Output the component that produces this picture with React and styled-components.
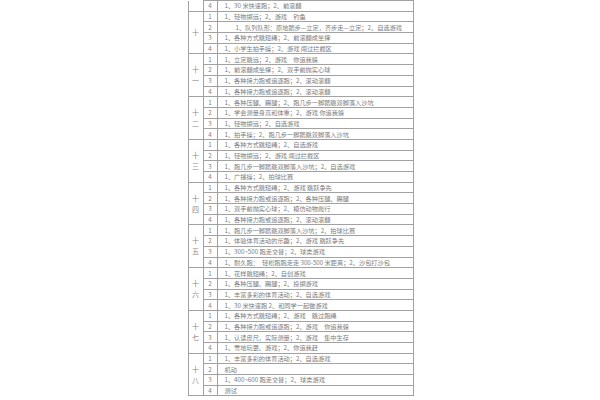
import React from "react";
import styled, { createGlobalStyle } from "styled-components";

const GlobalStyle = createGlobalStyle`
  html, body { margin: 0; padding: 0; background: #ffffff; }
  body { font-family: "Noto Sans CJK SC", "Noto Sans", sans-serif; }
`;

const Page = styled.div`
  width: 600px;
  height: 400px;
  overflow: hidden;
  display: flex;
  justify-content: center;
  align-items: flex-start;
`;

const Table = styled.table`
  border-collapse: collapse;
  table-layout: fixed;
  width: 226px;
  margin-left: 1px;
  color: #7c7c7c;
  font-size: 6.2px;
`;

const Row = styled.tr`
  height: 10.7px;
`;

const LabelCell = styled.td`
  width: 15px;
  border: 1px solid #a2a2a2;
  border-top: ${(p) => (p.$open ? "none" : "1px solid #a2a2a2")};
  text-align: center;
  vertical-align: middle;
  padding: 0;
  font-size: 7px;
  line-height: 11px;
  color: #8a8a8a;
`;

const NumCell = styled.td`
  width: 14px;
  border: 1px solid #a2a2a2;
  text-align: center;
  padding: 0;
  line-height: 9px;
  white-space: nowrap;
`;

const TextCell = styled.td`
  border: 1px solid #a2a2a2;
  padding: 0 0 0 ${(p) => (p.$indent ? "18px" : "7px")};
  line-height: 9px;
  white-space: nowrap;
  overflow: hidden;
`;

const groups = [
  {
    label: null,
    rows: [["4", "1、30 米快速跑；2、前滚翻"]],
  },
  {
    label: ["十"],
    rows: [
      ["1", "1、轻物掷远；2、游戏　钓鱼"],
      ["2", "1、队列队形：原地踏步—立定，齐步走—立定；2、自选游戏", true],
      ["3", "1、各种方式跳短绳；2、前滚翻成坐撑"],
      ["4", "1、小学生拍手操；2、游戏 闯过拦截区"],
    ],
  },
  {
    label: ["十", "一"],
    rows: [
      ["1", "1、立定跳远；2、游戏　你追我躲"],
      ["2", "1、前滚翻成坐撑；2、双手前抛实心球"],
      ["3", "1、各种接力跑或追逐跑；2、滚动滚翻"],
      ["4", "1、各种接力跑或追逐跑；2、滚动滚翻"],
    ],
  },
  {
    label: ["十", "二"],
    rows: [
      ["1", "1、各种压腿、踢腿；2、跑几步一脚踏跳双脚落入沙坑"],
      ["2", "1、学会测量身高和体重；2、游戏 你追我躲"],
      ["3", "1、轻物掷远；2、自选游戏"],
      ["4", "1、拍手操；2、跑几步一脚踏跳双脚落入沙坑"],
    ],
  },
  {
    label: ["十", "三"],
    rows: [
      ["1", "1、各种方式跳短绳；2、自选游戏"],
      ["2", "1、轻物掷远；2、游戏 闯过拦截区"],
      ["3", "1、跑几步一脚踏跳双脚落入沙坑；2、自选游戏"],
      ["4", "1、广播操；2、拍球比赛"],
    ],
  },
  {
    label: ["十", "四"],
    rows: [
      ["1", "1、各种方式跳短绳；2、游戏 跳跃争先"],
      ["2", "1、各种接力跑或追逐跑；2、各种压腿、踢腿"],
      ["3", "1、双手前抛实心球；2、模仿动物爬行"],
      ["4", "1、各种接力跑或追逐跑；2、滚动滚翻"],
    ],
  },
  {
    label: ["十", "五"],
    rows: [
      ["1", "1、跑几步一脚踏跳双脚落入沙坑；2、拍球比赛"],
      ["2", "1、体验体育活动的乐趣；2、游戏 跳跃争先"],
      ["3", "1、300~500 跑走交替；2、球类游戏"],
      ["4", "1、耐久跑：　轻松跑跑走走 300-500 米距离；2、沙包打沙包"],
    ],
  },
  {
    label: ["十", "六"],
    rows: [
      ["1", "1、花样跳短绳；2、自创游戏"],
      ["2", "1、各种压腿、踢腿；2、投掷游戏"],
      ["3", "1、丰富多彩的体育活动；2、自选游戏"],
      ["4", "1、30 米快速跑 2、和同学一起做游戏"],
    ],
  },
  {
    label: ["十", "七"],
    rows: [
      ["1", "1、各种方式跳短绳；2、游戏　跳过跑绳"],
      ["2", "1、各种接力跑或追逐跑；2、游戏　你追我躲"],
      ["3", "1、认读皮尺，实际测量；2、游戏　集中生存"],
      ["4", "1、雪地玩耍、游戏；2、你追我赶"],
    ],
  },
  {
    label: ["十", "八"],
    rows: [
      ["1", "1、丰富多彩的体育活动；2、自选游戏"],
      ["2", "机动"],
      ["3", "1、400~600 跑走交替；2、球类游戏"],
      ["4", "测试"],
    ],
  },
];

export default function App() {
  return (
    <>
      <GlobalStyle />
      <Page>
        <Table>
          <colgroup>
            <col style={{ width: "15px" }} />
            <col style={{ width: "14px" }} />
            <col />
          </colgroup>
          <tbody>
            {groups.map((g, gi) =>
              g.rows.map((r, ri) => (
                <Row key={`${gi}-${ri}`}>
                  {ri === 0 && (
                    <LabelCell rowSpan={g.rows.length} $open={!g.label}>
                      {g.label &&
                        g.label.map((c, ci) => (
                          <React.Fragment key={ci}>
                            {ci > 0 && <br />}
                            {c}
                          </React.Fragment>
                        ))}
                    </LabelCell>
                  )}
                  <NumCell>{r[0]}</NumCell>
                  <TextCell $indent={r[2]}>{r[1]}</TextCell>
                </Row>
              ))
            )}
          </tbody>
        </Table>
      </Page>
    </>
  );
}
